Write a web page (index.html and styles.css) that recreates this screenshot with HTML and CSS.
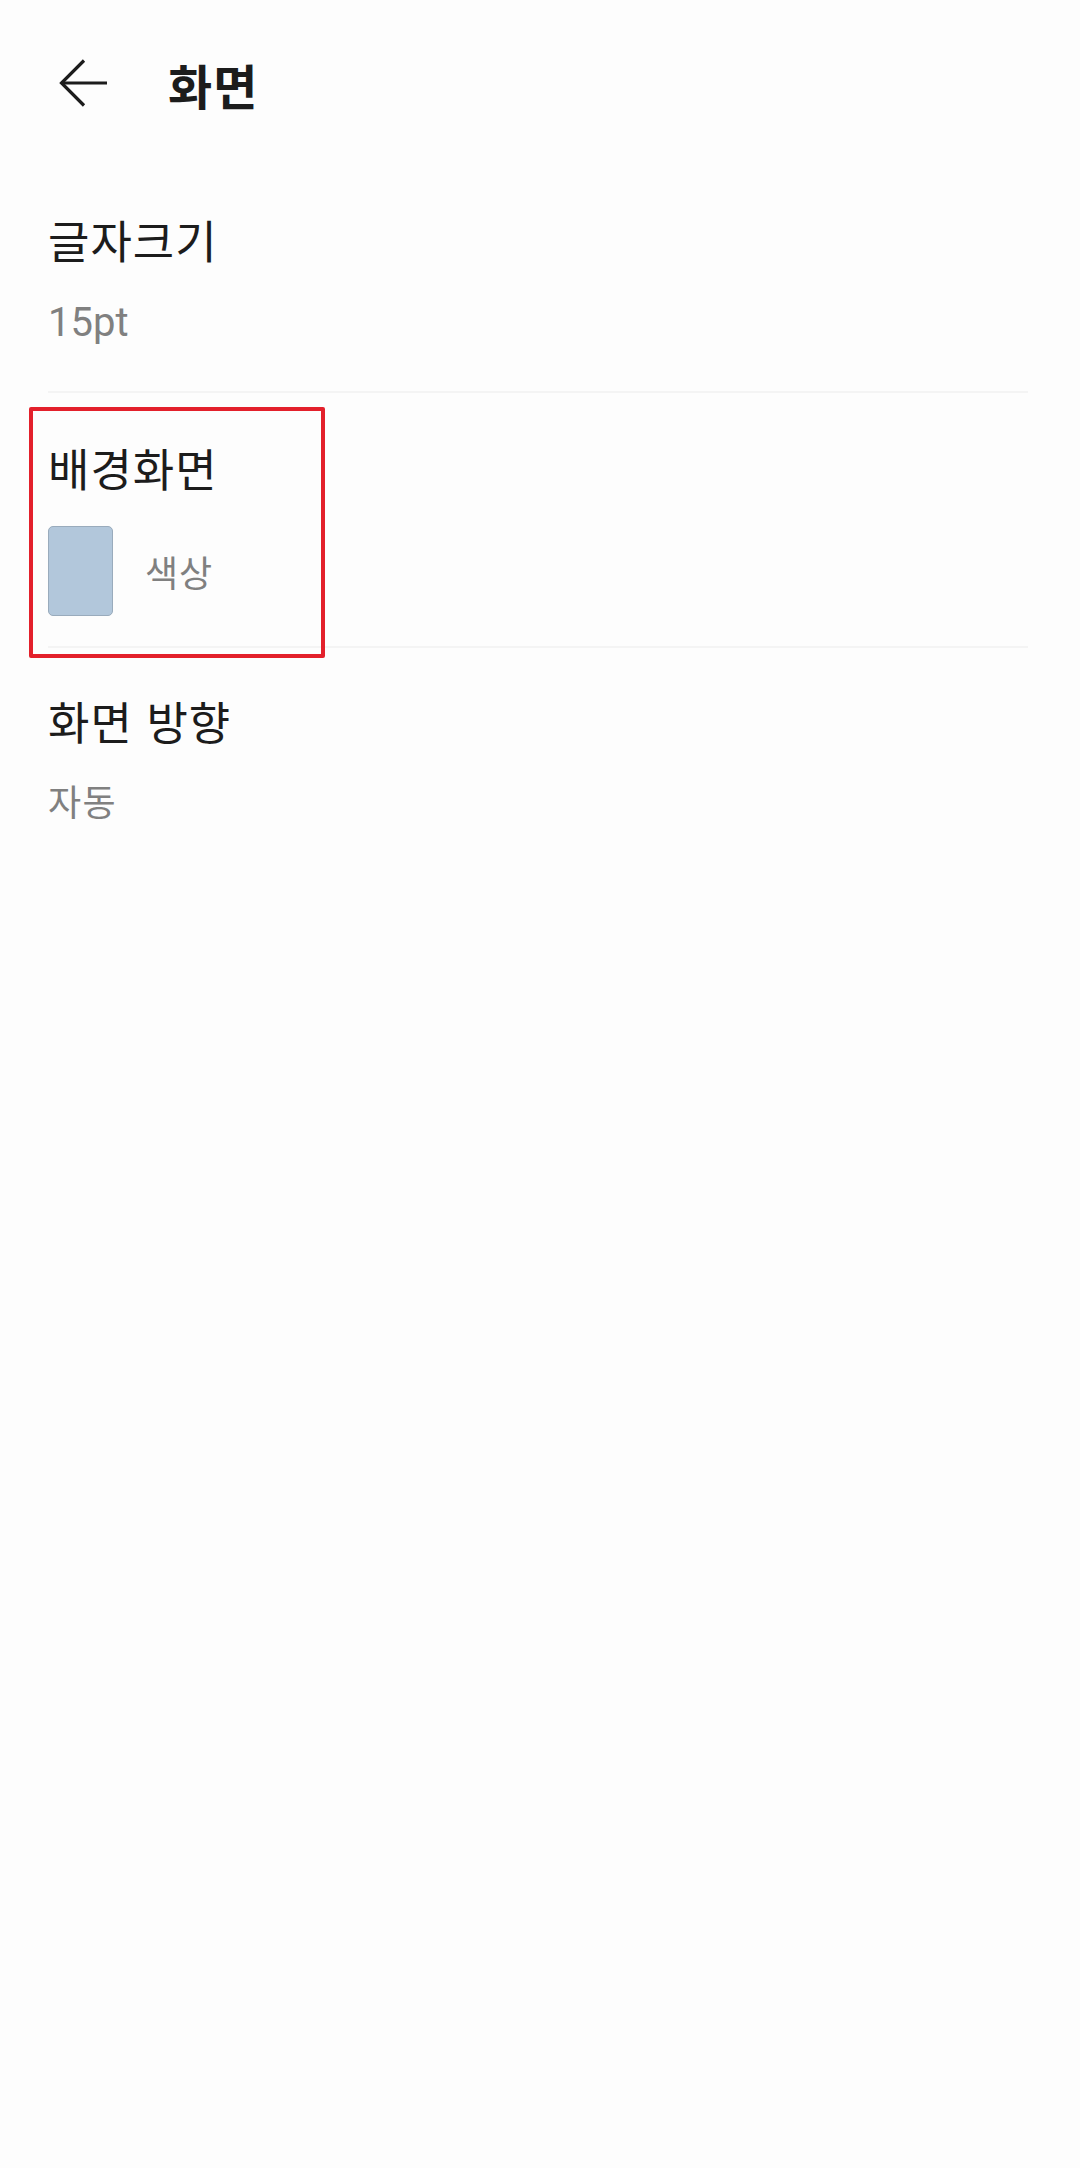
FILE: index.html
```html
<!DOCTYPE html>
<html lang="ko">
<head>
<meta charset="utf-8">
<title>화면</title>
<link rel="stylesheet" href="styles.css">
</head>
<body>
<div class="screen">
  <header class="appbar">
    <button class="back" aria-label="뒤로">
      <svg width="50" height="50" viewBox="0 0 50 50" fill="none" stroke="#1c1c1c" stroke-width="3.2" stroke-linecap="butt" stroke-linejoin="miter">
        <path d="M49 24H3.5"/>
        <path d="M26 1.5L3.5 24L26 46.5"/>
      </svg>
    </button>
    <h1 class="title">화면</h1>
  </header>
  <main class="list">
    <section class="item item-font">
      <div class="item-title">글자크기</div>
      <div class="item-sub">15pt</div>
    </section>
    <section class="item item-bg">
      <div class="item-title">배경화면</div>
      <div class="bg-row">
        <span class="swatch"></span>
        <span class="bg-label">색상</span>
      </div>
      <span class="highlight"></span>
    </section>
    <section class="item item-orient">
      <div class="item-title">화면 방향</div>
      <div class="item-sub">자동</div>
    </section>
  </main>
</div>
</body>
</html>
```

FILE: styles.css
```css
html, body {
  margin: 0;
  padding: 0;
  background: #fdfdfd;
}
body {
  font-family: Roboto, "Noto Sans CJK KR", "Noto Sans", sans-serif;
  color: #1c1c1c;
  width: 1080px;
  height: 2168px;
  overflow: hidden;
}
.screen {
  width: 1080px;
}
.appbar {
  height: 168px;
  display: flex;
  align-items: center;
  padding-left: 58px;
  box-sizing: border-box;
}
.back {
  width: 50px;
  height: 50px;
  padding: 0;
  margin: 0;
  border: 0;
  background: none;
  display: flex;
}
.title {
  margin: 0 0 0 60px;
  font-family: "Noto Sans CJK KR", sans-serif;
  font-weight: 700;
  font-size: 48px;
  line-height: 56px;
  letter-spacing: 1px;
  color: #1c1c1c;
}
.list {
  padding: 0 52px 0 48px;
}
.item {
  border-bottom: 2px solid #f4f4f4;
  position: relative;
}
.item-title {
  font-family: "Noto Sans CJK KR", sans-serif;
  font-size: 45px;
  line-height: 56px;
  letter-spacing: 1px;
  color: #1c1c1c;
}
.item-sub {
  font-family: Roboto, "Noto Sans CJK KR", sans-serif;
  font-size: 40px;
  line-height: 48px;
  color: #808080;
}
.item-font {
  padding: 44px 0 0;
  height: 225px;
  box-sizing: border-box;
}
.item-font .item-sub {
  margin-top: 31px;
}
.item-bg {
  padding: 47px 0 0;
  height: 255px;
  box-sizing: border-box;
}
.bg-row {
  display: flex;
  align-items: center;
  margin-top: 30px;
}
.swatch {
  width: 65px;
  height: 90px;
  box-sizing: border-box;
  background: #b2c7db;
  border: 1.5px solid #99abbc;
  border-radius: 5px;
}
.bg-label {
  margin-left: 32px;
  font-family: "Noto Sans CJK KR", sans-serif;
  font-size: 36px;
  line-height: 48px;
  letter-spacing: 1px;
  color: #808080;
}
.item-orient {
  padding-top: 45px;
  border-bottom: 0;
}
.item-orient .item-sub {
  margin-top: 31px;
  font-size: 36px;
  letter-spacing: 1.5px;
}
.highlight {
  position: absolute;
  left: -19px;
  top: 14px;
  width: 296px;
  height: 251px;
  box-sizing: border-box;
  border: 4px solid #e3202b;
  border-radius: 2px;
  pointer-events: none;
}
```
